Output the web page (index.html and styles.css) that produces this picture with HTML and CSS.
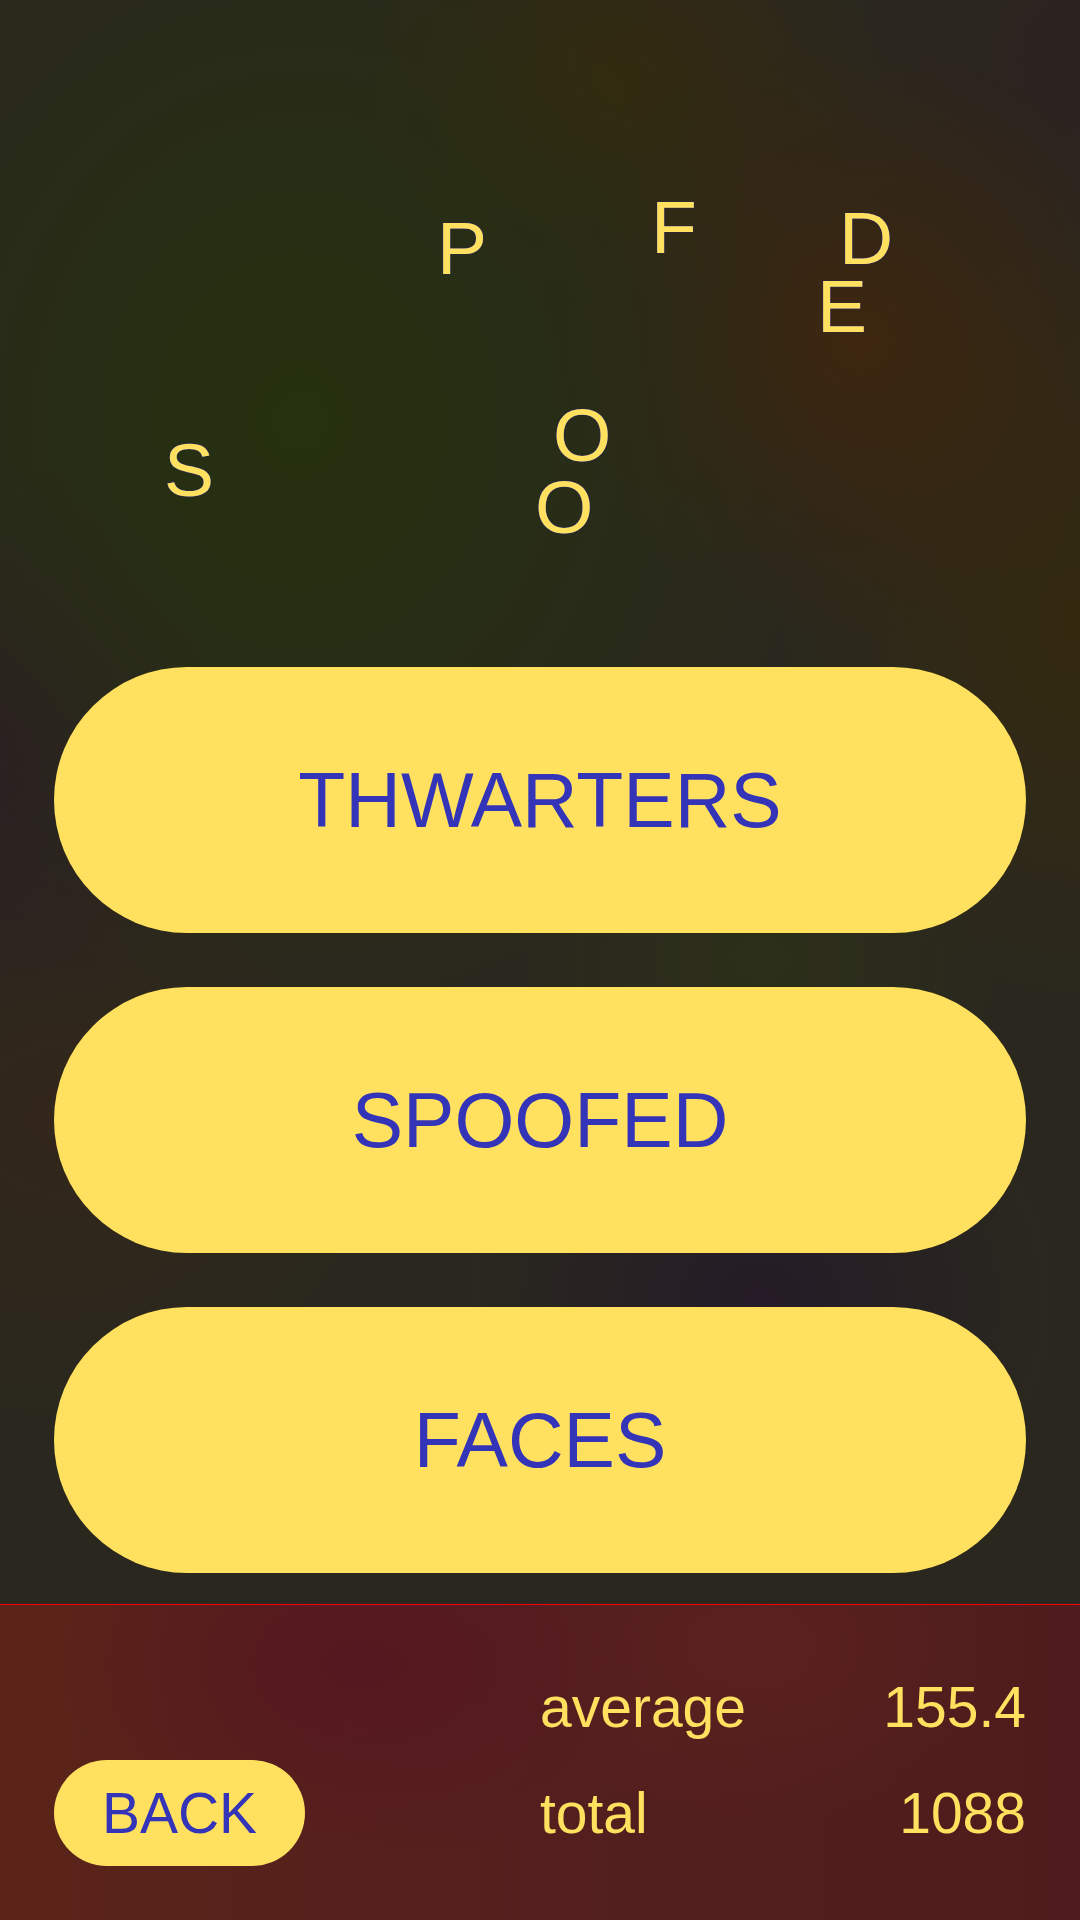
FILE: index.html
```html
<!DOCTYPE html>
<html lang="en">
<head>
<meta charset="utf-8">
<title>Word game</title>
<link rel="stylesheet" href="styles.css">
</head>
<body>
<div class="app">
  <div class="board">
    <span class="tile" style="left:437px;top:211px">P</span>
    <span class="tile" style="left:651px;top:190px">F</span>
    <span class="tile" style="left:839px;top:201px">D</span>
    <span class="tile" style="left:817px;top:269px">E</span>
    <span class="tile" style="left:164px;top:433px">S</span>
    <span class="tile" style="left:553px;top:398px">O</span>
    <span class="tile" style="left:535px;top:470px">O</span>
  </div>
  <div class="choices">
    <button class="choice">THWARTERS</button>
    <button class="choice">SPOOFED</button>
    <button class="choice">FACES</button>
  </div>
  <div class="footer">
    <button class="back">BACK</button>
    <div class="stats">
      <span class="label">average</span><span class="value">155.4</span>
      <span class="label">total</span><span class="value">1088</span>
    </div>
  </div>
</div>
</body>
</html>
```
FILE: styles.css
```css
html, body {
  margin: 0;
  padding: 0;
}
body {
  width: 1080px;
  height: 1920px;
  overflow: hidden;
  font-family: "Liberation Sans", Arial, sans-serif;
  background: #2a2620;
}
.app {
  width: 1080px;
  height: 1920px;
  display: flex;
  flex-direction: column;
  background:
    radial-gradient(ellipse 520px 600px at 300px 420px, rgba(38, 50, 14, 0.95), rgba(38, 50, 14, 0) 100%),
    radial-gradient(ellipse 300px 300px at 860px 340px, rgba(62, 38, 14, 0.95), rgba(62, 38, 14, 0) 100%),
    radial-gradient(ellipse 260px 220px at 620px 80px, rgba(54, 42, 14, 0.9), rgba(54, 42, 14, 0) 100%),
    radial-gradient(ellipse 300px 380px at 1080px 620px, rgba(54, 42, 14, 0.9), rgba(54, 42, 14, 0) 100%),
    radial-gradient(ellipse 240px 200px at 760px 960px, rgba(44, 48, 24, 0.9), rgba(44, 48, 24, 0) 100%),
    radial-gradient(ellipse 240px 280px at 0px 740px, rgba(44, 28, 38, 0.9), rgba(44, 28, 38, 0) 100%),
    radial-gradient(ellipse 320px 300px at 60px 1120px, rgba(52, 38, 26, 0.9), rgba(52, 38, 26, 0) 100%),
    radial-gradient(ellipse 300px 260px at 760px 1300px, rgba(36, 26, 40, 0.9), rgba(36, 26, 40, 0) 100%),
    radial-gradient(ellipse 260px 280px at 1080px 60px, rgba(44, 34, 32, 0.9), rgba(44, 34, 32, 0) 100%),
    #2a281e;
}
.board {
  position: relative;
  height: 667px;
  flex: none;
}
.tile {
  position: absolute;
  font-size: 75px;
  line-height: 75px;
  color: #ffe15f;
  text-shadow: 0 0 1px #2c2ca8, 0 0 1px #2c2ca8;
}
.choices {
  display: flex;
  flex-direction: column;
  gap: 54px;
  padding: 0 54px;
  flex: none;
}
.choice {
  height: 266px;
  border: none;
  margin: 0;
  border-radius: 133px;
  background: #ffe15f;
  color: #3434b8;
  font-family: "Liberation Sans", Arial, sans-serif;
  font-size: 77px;
  padding: 0;
}
.footer {
  margin-top: 31px;
  flex: 1;
  border-top: 1px solid #ff0000;
  display: flex;
  align-items: flex-end;
  padding: 0 54px 54px 54px;
  background:
    radial-gradient(ellipse 300px 200px at 360px 60px, rgba(86, 22, 32, 0.9), rgba(86, 22, 32, 0) 100%),
    radial-gradient(ellipse 260px 180px at 760px 40px, rgba(92, 34, 32, 0.8), rgba(92, 34, 32, 0) 100%),
    linear-gradient(90deg, #5a2418 0%, #55201e 40%, #4e1c1c 100%);
}
.back {
  width: 251px;
  height: 106px;
  border: none;
  margin: 0;
  padding: 0;
  border-radius: 53px;
  background: #ffe15f;
  color: #3434b8;
  font-family: "Liberation Sans", Arial, sans-serif;
  font-size: 57px;
}
.stats {
  margin-left: auto;
  width: 486px;
  display: grid;
  grid-template-columns: 1fr auto;
  grid-auto-rows: 106px;
  font-size: 57px;
  line-height: 106px;
  color: #ffe15f;
}
.value {
  text-align: right;
}
```
